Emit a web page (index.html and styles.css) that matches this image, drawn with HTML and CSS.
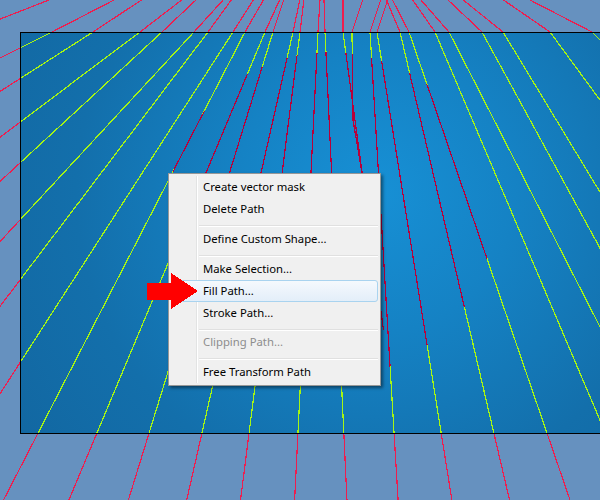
FILE: index.html
```html
<!DOCTYPE html>
<html>
<head>
<meta charset="utf-8">
<link rel="stylesheet" href="styles.css">
</head>
<body>
<div class="workspace">
  <div class="canvas"></div>
  <svg class="paths" width="600" height="500" viewBox="0 0 600 500" shape-rendering="crispEdges">
    <defs>
      <g id="lines" fill="none">
        <path d="M-10 23 L49 0"/>
        <path d="M116 -1 L52 32 L-924 520"/>
        <path d="M143 -1 L93 32 L-670.7 520"/>
        <path d="M183 -1 L140 32 L-509 520"/>
        <path d="M197 -1 L162 32 L-367 520"/>
        <path d="M224 -1 L194 32 L-257.9 520"/>
        <path d="M232 -1 L208 32 L-161.9 520"/>
        <path d="M254 -1 L233 32 L-81.3 520"/>
        <path d="M264 -1 L245 32 L-6.8 520"/>
        <path d="M280 -1 L265 32 L60.5 520"/>
        <path d="M284 -1 L273 32 L122.2 520"/>
        <path d="M300 -1 L293 32 L182.2 520"/>
        <path d="M304 -1 L300 32 L238 520"/>
        <path d="M320 -1 L318 32 L293.6 520"/>
        <path d="M324 -1 L325 32 L347.9 520"/>
        <path d="M343 -1 L343 32 L383.5 330"/>
        <path d="M363 -1 L352 32 L353 120 L362 173 L375 260"/>
        <path d="M381 -1 L370 32 L399.3 520"/>
        <path d="M388 -1 L377 32 L455.1 520"/>
        <path d="M386 -1 L400 32 L514.2 520"/>
        <path d="M392 -1 L409 32 L576.9 520"/>
        <path d="M412 -1 L435 32 L642.4 520"/>
        <path d="M420 -1 L449 32 L698.9 520"/>
        <path d="M447 -1 L482 32 L748.4 520"/>
        <path d="M462 -1 L503 32 L798.7 520"/>
        <path d="M502 -1 L550 32 L908.7 520"/>
        <path d="M528 -1 L592 32 L1080 520"/>
      </g>
      <mask id="outside" maskUnits="userSpaceOnUse" x="0" y="0" width="600" height="500">
        <rect x="0" y="0" width="600" height="500" fill="#fff"/>
        <rect x="20" y="32" width="580" height="402" fill="#000"/>
      </mask>
      <mask id="inside" maskUnits="userSpaceOnUse" x="0" y="0" width="600" height="500">
        <rect x="21" y="33" width="579" height="400" fill="#fff"/>
        <circle cx="330" cy="215" r="163" fill="#000"/>
      </mask>
      <mask id="core" maskUnits="userSpaceOnUse" x="0" y="0" width="600" height="500">
        <circle cx="330" cy="215" r="163" fill="#fff"/>
      </mask>
    </defs>
    <use href="#lines" stroke="#ee1d4e" stroke-width="1.2" mask="url(#outside)"/>
    <use href="#lines" stroke="#a6f514" stroke-width="1.2" mask="url(#inside)"/>
    <use href="#lines" stroke="#b8003a" stroke-width="1.2" mask="url(#core)"/>
  </svg>

  <div class="menu">
    <div class="item">Create vector mask</div>
    <div class="item">Delete Path</div>
    <div class="sep"></div>
    <div class="item">Define Custom Shape...</div>
    <div class="sep"></div>
    <div class="item">Make Selection...</div>
    <div class="item active">Fill Path...</div>
    <div class="item">Stroke Path...</div>
    <div class="sep"></div>
    <div class="item disabled">Clipping Path...</div>
    <div class="sep"></div>
    <div class="item">Free Transform Path</div>
  </div>

  <svg class="arrow" width="56" height="42" viewBox="0 0 56 42" shape-rendering="crispEdges">
    <polygon points="2,13 26,13 26,3 53,21 26,39 26,30 2,30" fill="#ff0000"/>
  </svg>
</div>
</body>
</html>
```
FILE: styles.css
```css
html, body {
  margin: 0;
  padding: 0;
}

body {
  background: #6691bf;
}

.workspace {
  position: relative;
  width: 600px;
  height: 500px;
  overflow: hidden;
  background: #6691bf;
  padding: 32px 0 0 20px;
  box-sizing: border-box;
}

.canvas {
  width: 600px;
  height: 402px;
  box-sizing: border-box;
  border: 1px solid #000;
  border-right: none;
  background: radial-gradient(circle at 355px 160px, #1790d5 0, #1582c4 140px, #136fab 300px, #1266a0 460px);
}

.paths {
  position: absolute;
  left: 0;
  top: 0;
}

.menu {
  position: absolute;
  left: 168px;
  top: 173px;
  width: 213px;
  height: 213px;
  box-sizing: border-box;
  border: 1px solid #979797;
  background: #f0f0f0;
  padding: 2px;
  display: flex;
  flex-direction: column;
  box-shadow: 2px 2px 3px rgba(0, 0, 0, 0.45);
  font-family: "Noto Sans", "Open Sans", sans-serif;
  font-size: 11.3px;
  color: #000;
}

.menu::before {
  content: "";
  position: absolute;
  left: 27px;
  top: 2px;
  bottom: 2px;
  width: 1px;
  background: #e2e3e3;
  border-right: 1px solid #fff;
}

.item {
  position: relative;
  height: 22px;
  line-height: 20px;
  padding-left: 31px;
  border: 1px solid transparent;
  border-radius: 3px;
  box-sizing: border-box;
  white-space: nowrap;
}

.item.active {
  z-index: 1;
  border-color: #a9d3ef;
  background: linear-gradient(#f5f9fd, #e3eef9);
}

.item.disabled {
  color: #8d8d8d;
}

.sep {
  height: 8px;
  margin-left: 28px;
  padding-top: 5px;
  box-sizing: border-box;
}

.sep::before {
  content: "";
  display: block;
  height: 1px;
  background: #e0e0e0;
  border-bottom: 1px solid #fff;
}

.arrow {
  position: absolute;
  z-index: 2;
  left: 145px;
  top: 270px;
}
```
